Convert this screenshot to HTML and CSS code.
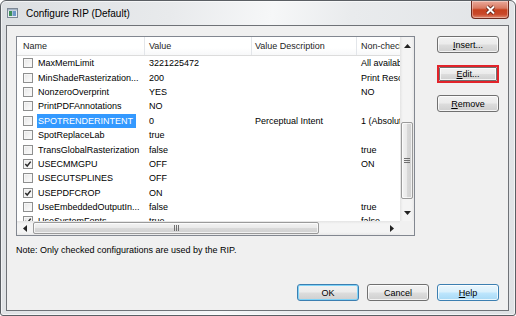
FILE: index.html
```html
<!DOCTYPE html>
<html lang="en">

<head>
    <meta charset="UTF-8" />
    <title>Configure RIP (Default)</title>
    <link rel="stylesheet" href="styles.css">
</head>

<body>
    <div class="window">
        <div class="titlebar">
            <svg class="app-icon" width="11" height="10" viewBox="0 0 11 10">
                <rect x="0.5" y="0.5" width="10" height="9" fill="#e9edf1" stroke="#7b8794" />
                <rect x="1" y="1" width="9" height="1.5" fill="#a3b3c4" />
                <rect x="2" y="3" width="3" height="5" fill="#3d8f5a" />
                <rect x="5.5" y="3" width="3.5" height="5" fill="#6d98c8" />
            </svg>
            <span class="title">Configure RIP (Default)</span>
            <div class="close">
                <svg width="13" height="10" viewBox="0 0 13 10">
                    <path d="M3 1.5 L10 8.5 M10 1.5 L3 8.5" stroke="#5b1d12" stroke-width="3.6" />
                    <path d="M3 1.5 L10 8.5 M10 1.5 L3 8.5" stroke="#fff" stroke-width="2" />
                </svg>
            </div>
        </div>

        <div class="client">
            <div class="top">
                <div class="list">
                    <div class="view">
                        <div class="head">
                            <div class="hcell c-name">Name</div>
                            <div class="hcell c-value">Value</div>
                            <div class="hcell c-desc">Value Description</div>
                            <div class="hcell c-non">Non-checked Value</div>
                        </div>
                        <div id="rows"></div>
                    </div>
                    <div class="vscroll">
                        <div class="arrow">
                            <svg width="7" height="4" viewBox="0 0 7 4"><path d="M0 4 L3.5 0 L7 4 Z" fill="#222" /></svg>
                        </div>
                        <div class="track">
                            <div class="thumb">
                                <svg width="6" height="5" viewBox="0 0 6 5">
                                    <path d="M0 0.5 H6 M0 2.5 H6 M0 4.5 H6" stroke="#6f6f6f" stroke-width="1" />
                                </svg>
                            </div>
                        </div>
                        <div class="arrow">
                            <svg width="7" height="4" viewBox="0 0 7 4"><path d="M0 0 L3.5 4 L7 0 Z" fill="#222" /></svg>
                        </div>
                    </div>
                    <div class="hscroll">
                        <div class="arrow">
                            <svg width="4" height="7" viewBox="0 0 4 7"><path d="M4 0 L0 3.5 L4 7 Z" fill="#222" /></svg>
                        </div>
                        <div class="track">
                            <div class="thumb">
                                <svg width="5" height="6" viewBox="0 0 5 6">
                                    <path d="M0.5 0 V6 M2.5 0 V6 M4.5 0 V6" stroke="#6f6f6f" stroke-width="1" />
                                </svg>
                            </div>
                        </div>
                        <div class="arrow">
                            <svg width="4" height="7" viewBox="0 0 4 7"><path d="M0 0 L4 3.5 L0 7 Z" fill="#222" /></svg>
                        </div>
                    </div>
                    <div class="corner"></div>
                </div>

                <div class="side">
                    <button class="btn"><u>I</u>nsert...</button>
                    <div class="mark"><button class="btn"><u>E</u>dit...</button></div>
                    <button class="btn"><u>R</u>emove</button>
                </div>
            </div>

            <p class="note">Note: Only checked configurations are used by the RIP.</p>

            <div class="actions">
                <button class="btn default">OK</button>
                <button class="btn">Cancel</button>
                <button class="btn hover"><u>H</u>elp</button>
            </div>
        </div>
    </div>

    <script>
        const rows = [
            ['MaxMemLimit', '3221225472', '', 'All available', false],
            ['MinShadeRasterization...', '200', '', 'Print Resolution', false],
            ['NonzeroOverprint', 'YES', '', 'NO', false],
            ['PrintPDFAnnotations', 'NO', '', '', false],
            ['SPOTRENDERINTENT', '0', 'Perceptual Intent', '1 (Absolute)', false, true],
            ['SpotReplaceLab', 'true', '', '', false],
            ['TransGlobalRasterization', 'false', '', 'true', false],
            ['USECMMGPU', 'OFF', '', 'ON', true],
            ['USECUTSPLINES', 'OFF', '', '', false],
            ['USEPDFCROP', 'ON', '', '', true],
            ['UseEmbeddedOutputIn...', 'false', '', 'true', false],
            ['UseSystemFonts', 'true', '', 'false', true]
        ];

        const check = '<svg width="8" height="8" viewBox="0 0 8 8"><path d="M1.3 4 L3.2 6 L6.7 1.6" fill="none" stroke="#2b2b2b" stroke-width="1.5"/></svg>';

        const list = document.getElementById('rows');
        rows.forEach(([name, value, desc, non, checked, selected]) => {
            const row = document.createElement('div');
            row.className = 'row';
            row.innerHTML =
                '<div class="cell c-name"><span class="chk">' + (checked ? check : '') + '</span>' +
                '<span class="label' + (selected ? ' selected' : '') + '">' + name + '</span></div>' +
                '<div class="cell c-value">' + value + '</div>' +
                '<div class="cell c-desc">' + desc + '</div>' +
                '<div class="cell c-non">' + non + '</div>';
            list.appendChild(row);
        });
    </script>
</body>

</html>
```

FILE: styles.css
```css
* {
    box-sizing: border-box;
}

html,
body {
    margin: 0;
    padding: 0;
    background: white;
    font-family: 'Liberation Sans', Arial, sans-serif;
    font-size: 9px;
    color: #000;
}

.window {
    width: 516px;
    height: 316px;
    border: 1px solid #5b5f64;
    border-radius: 6px 6px 3px 3px;
    padding: 0 6px 4px 5px;
    display: flex;
    flex-direction: column;
    background: linear-gradient(100deg, #dcdfe2 0%, #e8eaec 30%, #f6f7f8 48%, #e9ebed 62%, #dfe2e5 100%);
    box-shadow: inset 0 0 0 1px rgba(255, 255, 255, 0.6);
}

.titlebar {
    height: 24px;
    display: flex;
    align-items: center;
}

.app-icon {
    margin-left: 1px;
    margin-right: 8px;
}

.title {
    font-size: 10px;
    color: #000;
}

.close {
    margin-left: auto;
    align-self: flex-start;
    width: 38px;
    height: 18px;
    border: 1px solid #6e2a1e;
    border-top: none;
    border-radius: 0 0 4px 4px;
    background: linear-gradient(#eaa99a, #d87a62 42%, #c6411f 52%, #c9482a 78%, #e08a6f);
    box-shadow: inset 0 0 0 1px rgba(255, 255, 255, 0.35);
    display: flex;
    align-items: center;
    justify-content: center;
}

.client {
    height: 286px;
    border: 1px solid #6f7277;
    background: #f0f0f0;
    padding: 10px 9px 9px 9px;
    display: flex;
    flex-direction: column;
}

.top {
    display: flex;
    gap: 22px;
    align-items: flex-start;
}

/* list view */

.list {
    width: 399px;
    height: 200px;
    border: 1px solid #828790;
    background: #fff;
    display: grid;
    grid-template-columns: 383px 14px;
    grid-template-rows: 184px 14px;
}

.view {
    overflow: hidden;
}

.head,
.row {
    display: grid;
    grid-template-columns: 128px 107px 105px 120px;
    white-space: nowrap;
}

.head {
    height: 19px;
    border-bottom: 1px solid #dcdcdc;
    background: linear-gradient(#ffffff, #ffffff 60%, #f7f8f9);
}

.hcell {
    display: flex;
    align-items: center;
    padding-left: 4px;
    border-right: 1px solid #e3e6ea;
    color: #1e1e1e;
    overflow: hidden;
}

.hcell.c-name {
    padding-left: 6px;
}

.hcell.c-desc {
    padding-left: 3px;
}

.row {
    height: 14.4px;
}

.cell {
    display: flex;
    align-items: center;
    padding-left: 4px;
    overflow: hidden;
}

.cell.c-name {
    padding-left: 6px;
}

.cell.c-desc {
    padding-left: 3px;
}

.chk {
    width: 10px;
    height: 10px;
    flex: none;
    border: 1px solid #8e8f8f;
    background: linear-gradient(135deg, #e6e6e6, #fdfdfd);
    box-shadow: inset 0 0 0 1px #f6f6f6;
    display: flex;
    align-items: center;
    justify-content: center;
    margin-right: 4px;
}

.label {
    padding: 1px 3px 1px 1px;
    line-height: 12px;
}

.label.selected {
    background: #3399ff;
    color: #fff;
}

/* scrollbars */

.vscroll,
.hscroll {
    display: flex;
}

.vscroll {
    flex-direction: column;
    background: linear-gradient(90deg, #e4e4e4, #f4f4f4 20%, #f4f4f4 80%, #e8e8e8);
}

.hscroll {
    background: linear-gradient(#e4e4e4, #f4f4f4 20%, #f4f4f4 80%, #e8e8e8);
}

.arrow {
    flex: none;
    display: flex;
    align-items: center;
    justify-content: center;
}

.vscroll .arrow {
    height: 17px;
}

.hscroll .arrow {
    width: 16px;
}

.track {
    flex: 1;
    display: flex;
}

.vscroll .track {
    flex-direction: column;
    padding: 68px 1px 0 1px;
}

.hscroll .track {
    padding: 1px 0 1px 0;
}

.thumb {
    border: 1px solid #9a9a9a;
    border-radius: 2px;
    display: flex;
    align-items: center;
    justify-content: center;
    box-shadow: inset 0 0 0 1px rgba(255, 255, 255, 0.7);
}

.vscroll .thumb {
    height: 77px;
    background: linear-gradient(90deg, #f3f3f3, #e9e9e9 50%, #d9d9d9 51%, #d0d0d0);
}

.hscroll .thumb {
    width: 286px;
    background: linear-gradient(#f3f3f3, #e9e9e9 50%, #d9d9d9 51%, #d0d0d0);
}

.corner {
    background: #f0f0f0;
}

/* buttons */

.side {
    display: flex;
    flex-direction: column;
    gap: 12px;
    width: 62px;
}

.btn {
    width: 62px;
    height: 17px;
    padding: 0;
    font-family: inherit;
    font-size: 9px;
    color: #000;
    border: 1px solid #707070;
    border-radius: 3px;
    background: linear-gradient(#f2f2f2, #ebebeb 48%, #dddddd 52%, #cfcfcf);
    box-shadow: inset 0 0 0 1px rgba(255, 255, 255, 0.75);
}

.btn u {
    text-decoration-thickness: 1px;
}

.mark {
    width: 62px;
    height: 18px;
    border: 2px solid #e2232a;
}

.mark .btn {
    width: 100%;
    height: 100%;
    border-radius: 1px;
}

.btn.default {
    border-color: #3c7fb1;
    box-shadow: inset 0 0 0 1px #7fd3f8;
}

.btn.hover {
    border-color: #3c7fb1;
    background: linear-gradient(#eaf6fd, #d9f0fc 48%, #bee6fd 52%, #a7d9f5);
}

.note {
    margin: 8px 0 0 0;
    line-height: 12px;
}

.actions {
    margin-top: auto;
    display: flex;
    justify-content: flex-end;
    gap: 8px;
}
```
